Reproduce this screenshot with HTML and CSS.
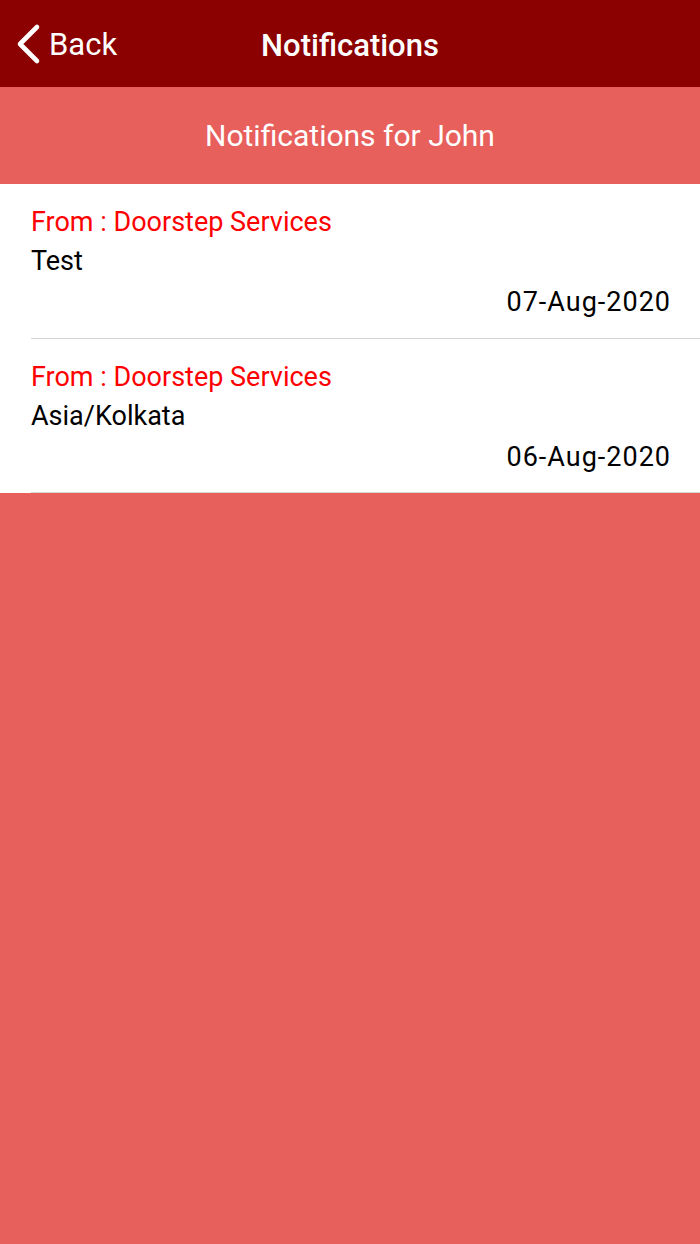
FILE: index.html
```html
<!DOCTYPE html>
<html>
<head>
<meta charset="utf-8">
<link rel="stylesheet" href="styles.css">
</head>
<body>
<div class="navbar">
  <div class="back">
    <svg class="chevron" width="26" height="42" viewBox="0 0 26 42"><path d="M22 4 L5 21 L22 38" fill="none" stroke="#fff" stroke-width="4.6" stroke-linecap="round" stroke-linejoin="round"/></svg>
    <span>Back</span>
  </div>
  <div class="title">Notifications</div>
</div>
<div class="subheader">Notifications for John</div>
<div class="list">
  <div class="row">
    <div class="from">From : Doorstep Services</div>
    <div class="msg">Test</div>
    <div class="date">07-Aug-2020</div>
  </div>
  <div class="row">
    <div class="from">From : Doorstep Services</div>
    <div class="msg">Asia/Kolkata</div>
    <div class="date">06-Aug-2020</div>
  </div>
</div>
</body>
</html>
```
FILE: styles.css
```css
body {margin: 0;background: #e8605c;font-family: Roboto, "Liberation Sans", sans-serif;}
.navbar {height: 87px;box-sizing: border-box;padding-top: 3px;background: #8b0000;color: #fff;display: flex;align-items: center;justify-content: center;position: relative;}
.back {position: absolute;left: 15px;top: 23px;display: flex;align-items: center;gap: 8px;font-size: 31px;}
.chevron {display: block;}
.title {font-size: 31px;font-weight: 500;}
.subheader {height: 97px;display: flex;align-items: center;justify-content: center;color: #fff;font-size: 30px;}
.list {background: #fff;}
.row {margin-left: 31px;height: 154px;border-bottom: 1px solid #d4d4d4;padding-right: 31px;box-sizing: border-box;padding-top: 19px;}
.row:first-child {height: 155px;}
.from {color: #f00;font-size: 27px;line-height: 38px;}
.msg {color: #000;font-size: 27px;line-height: 40px;}
.date {color: #000;font-size: 27px;line-height: 42px;text-align: right;letter-spacing: 1px;margin-right: -2px;}
```
